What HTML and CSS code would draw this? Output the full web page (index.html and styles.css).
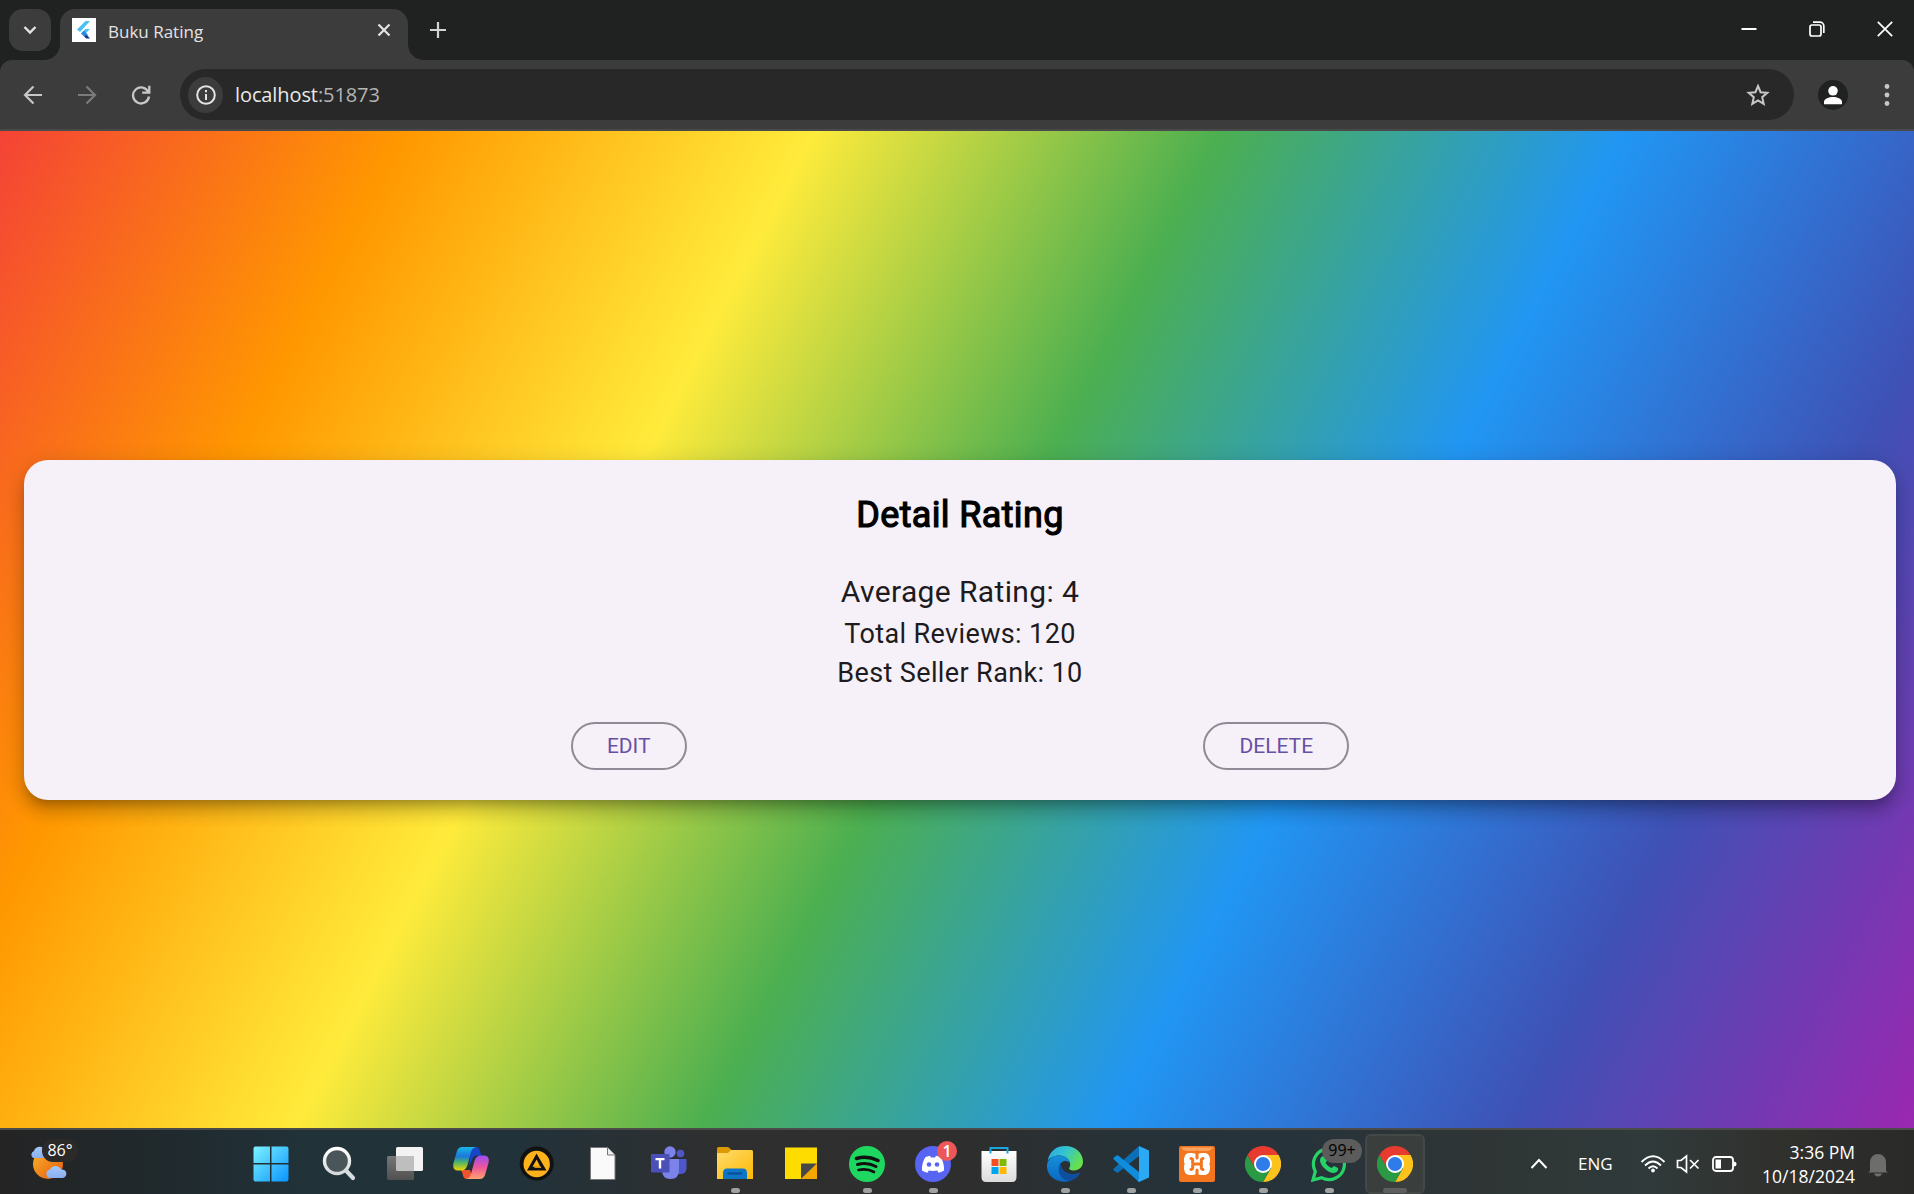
FILE: index.html
```html
<!DOCTYPE html>
<html lang="en">
<head>
<meta charset="utf-8">
<title>Buku Rating</title>
<link rel="stylesheet" href="styles.css">
</head>
<body>
<svg class="defs" width="0" height="0" aria-hidden="true">
  <defs>
    <linearGradient id="win" x1="0" y1="0" x2="1" y2="1"><stop offset="0" stop-color="#7df3ff"/><stop offset="1" stop-color="#0a94ff"/></linearGradient>
    <linearGradient id="glass" x1="0" y1="0" x2="0" y2="1"><stop offset="0" stop-color="#fff"/><stop offset="1" stop-color="#d5d9dc"/></linearGradient>
    <linearGradient id="tv" x1="0" y1="0" x2="0" y2="1"><stop offset="0" stop-color="#777"/><stop offset="1" stop-color="#505050"/></linearGradient>
    <linearGradient id="copA" x1="0" y1="0" x2="0" y2="1"><stop offset="0" stop-color="#1ab5e8"/><stop offset=".4" stop-color="#1b78dc"/><stop offset=".65" stop-color="#4db56a"/><stop offset="1" stop-color="#f2d600"/></linearGradient>
    <linearGradient id="copB" x1="0" y1="0" x2="0" y2="1"><stop offset="0" stop-color="#9a4df5"/><stop offset=".5" stop-color="#ee559a"/><stop offset="1" stop-color="#ffa36b"/></linearGradient>
    <linearGradient id="fold" x1="0" y1="0" x2="1" y2="1"><stop offset="0" stop-color="#ffdc70"/><stop offset="1" stop-color="#fbb900"/></linearGradient>
    <linearGradient id="sun" x1="0" y1="0" x2="1" y2="1"><stop offset="0" stop-color="#f9b52b"/><stop offset="1" stop-color="#e8590c"/></linearGradient>
    <linearGradient id="cloud" x1="0" y1="0" x2="0" y2="1"><stop offset="0" stop-color="#a3c8fb"/><stop offset="1" stop-color="#8aaef0"/></linearGradient>
    <linearGradient id="edgeTop" x1="0" y1="0" x2="1" y2=".5"><stop offset="0" stop-color="#2ba7e5"/><stop offset=".5" stop-color="#33c5cf"/><stop offset="1" stop-color="#68e04c"/></linearGradient>
    <linearGradient id="edgeLow" x1="0" y1="0" x2="0" y2="1"><stop offset="0" stop-color="#1590d8"/><stop offset="1" stop-color="#0a68c2"/></linearGradient>
    <linearGradient id="bag" x1="0" y1="0" x2="0" y2="1"><stop offset="0" stop-color="#fff"/><stop offset="1" stop-color="#dcdcdc"/></linearGradient>
    <symbol id="chrome" viewBox="0 0 36 36">
      <path d="M2.4 9A18 18 0 0 1 33.6 9H18L10.2 22.5Z" fill="#e63b2e"/>
      <path d="M33.6 9A18 18 0 0 1 18 36L25.8 22.5 18 9Z" fill="#fdc21c"/>
      <path d="M18 36A18 18 0 0 1 2.4 9L10.2 22.5H25.8Z" fill="#2a9a44"/>
      <circle cx="18" cy="18" r="9" fill="#fff"/><circle cx="18" cy="18" r="7.1" fill="#2f7bea"/>
    </symbol>
  </defs>
</svg>

<header class="tabstrip">
  <button class="tab-search" aria-label="Search tabs"><svg width="42" height="42" fill="none" stroke="#e3e3e3" stroke-width="2.4"><path d="M15.5 18 21 23.5 26.5 18"/></svg></button>
  <div class="tab">
    <svg class="favicon" width="24" height="24"><path fill="#fff" d="M0 0H24V24H0Z"/><path fill="#47c0f5" d="M13.5 3H18L8 14 5 11.5Z"/><path fill="#47c0f5" d="M13.5 11H18L12 17 9 15.5Z"/><path fill="#2b8ae0" d="M9 15.5 12 12.500 16 17 12 18.5Z"/><path fill="#10398c" d="M12 18 15 17 18 20.5H14Z"/></svg>
    <span class="tab-title">Buku Rating</span>
    <svg class="tab-close" width="14" height="14" stroke="#e3e3e3" stroke-width="2.2"><path d="M1.5 1.5 12.5 12.5M12.5 1.5 1.5 12.5"/></svg>
  </div>
  <svg class="tab-new" width="16" height="16" stroke="#d2d4d3" stroke-width="2.2"><path d="M8 0V16M0 8H16"/></svg>
  <div class="window-buttons">
    <svg width="16" height="16" stroke="#fff" stroke-width="2"><path d="M.5 8H15.5"/></svg>
    <svg width="16" height="16" fill="none" stroke="#fff" stroke-width="1.7"><rect x="1" y="4" width="11" height="11" rx="2"/><path d="M4 1.2H11A3.8 3.8 0 0 1 14.8 5V12"/></svg>
    <svg width="16" height="16" stroke="#fff" stroke-width="1.7"><path d="M.8.8 15.2 15.2M15.2.8.8 15.2"/></svg>
  </div>
</header>

<nav class="toolbar">
  <svg class="nav-icon" width="20" height="20" fill="none" stroke="#c7c7c7" stroke-width="2.2"><path d="M19 10H2.5M10.5 1.5 2 10 10.5 18.5"/></svg>
  <svg class="nav-icon" width="20" height="20" fill="none" stroke="#7b7b7b" stroke-width="2.2"><path d="M1 10H17.5M9.5 1.5 18 10 9.5 18.5"/></svg>
  <svg class="nav-icon" width="20" height="20" fill="none" stroke="#c7c7c7" stroke-width="2.3"><path d="M17.5 7.5A8 8 0 1 0 18 11.5M18.3.8V7.7H11.2"/></svg>
  <div class="omnibox">
    <span class="site-info"><svg width="20" height="20" fill="none" stroke="#e3e3e3" stroke-width="2"><circle cx="10" cy="10" r="8.8"/><path d="M10 9V15M10 5V7.2"/></svg></span>
    <span class="url">localhost<span class="port">:51873</span></span>
    <svg class="star" width="24" height="24" fill="none" stroke="#c7c7c7" stroke-width="2"><path d="M12 3 14.6 9.2 21.3 9.8 16.2 14.2 17.7 20.8 12 17.3 6.3 20.8 7.8 14.2 2.7 9.8 9.4 9.2Z"/></svg>
  </div>
  <svg class="profile" width="30" height="30"><circle cx="15" cy="15" r="15" fill="#1f2221"/><circle cx="15" cy="10.8" r="4.8" fill="#fff"/><path fill="#fff" d="M6 24.3V22C6 18.5 11 17 15 17S24 18.500 24 22V24.300Z"/></svg>
  <svg class="menu" width="6" height="24" fill="#c7c7c7"><circle cx="3" cy="3.500" r="2.400"/><circle cx="3" cy="12" r="2.400"/><circle cx="3" cy="20.500" r="2.400"/></svg>
</nav>

<main class="page">
  <section class="card">
    <h1 class="card-title">Detail Rating</h1>
    <p class="average">Average Rating: 4</p>
    <p class="stat">Total Reviews: 120</p>
    <p class="stat rank">Best Seller Rank: 10</p>
    <div class="actions">
      <button class="outlined">EDIT</button>
      <button class="outlined">DELETE</button>
    </div>
  </section>
</main>

<footer class="taskbar">
  <div class="weather">
    <svg width="38" height="36"><circle cx="18" cy="18" r="15" fill="url(#sun)"/><path fill="url(#cloud)" d="M3 12A4 4 0 0 1 4 5 6 6 0 0 1 15 4L16 12Z"/><path fill="url(#cloud)" d="M19 32A4.500 4.500 0 0 1 20 23.500 6 6 0 0 1 31 23.500 4.300 4.300 0 0 1 33 32Z"/></svg>
    <span class="temp">86°</span>
  </div>
  <div class="apps">
    <div class="app start"><svg width="36" height="36"><path fill="url(#win)" d="M2.500.5H17V17H.5V2.500Q.5.5 2.500.5ZM18.500.5H33.500Q35.500.5 35.500 2.500V17H18.500ZM.5 18.500H17V35.500H2.500Q.5 35.500.5 33.500ZM18.500 18.500H35.500V33.500Q35.500 35.500 33.500 35.500H18.500Z"/></svg></div>
    <div class="app"><svg width="36" height="36"><circle cx="16" cy="15" r="12.500" fill="#4a5559" stroke="url(#glass)" stroke-width="3.400"/><path d="M25 24.500 32 32" stroke="#d8dcdf" stroke-width="4.200" stroke-linecap="round"/></svg></div>
    <div class="app"><svg width="36" height="36"><rect x="9" y="1" width="27" height="24" rx="1.500" fill="#f2f2f2"/><rect x="0" y="10" width="27" height="24" rx="1.500" fill="url(#tv)"/><path d="M9 10H27V25H10.500Q9 25 9 23.500Z" fill="#bebebe"/></svg></div>
    <div class="app"><svg width="36" height="36"><path fill="#1745c7" d="M18 1H23C26 1 27 4 28 8.500Q29 9.500 30 9.500H23Q20 10 19 14L16 20Z"/><path fill="#f0532e" d="M8 24H17L19 30Q18 33 15 33C11 33 10 31 9.500 27Z"/><path fill="url(#copA)" d="M9 1H23Q19 2 18 6L14.500 19Q13 24.500 8 24.500H5Q-1 24.500.5 17L4 5Q5.500 1 9 1Z"/><path fill="url(#copB)" d="M27 33H13Q17 32 18 28L21.500 15Q23 9.500 28 9.500H31Q37 9.500 35.500 17L32 29Q30.500 33 27 33Z"/></svg></div>
    <div class="app"><svg width="36" height="36"><circle cx="17.700" cy="17.500" r="17" fill="#111"/><circle cx="17.700" cy="18" r="13.200" fill="#fdb21c"/><path fill="#111" fill-rule="evenodd" d="M17.500 7.500 27.500 24.500H8L17.500 7.500ZM17.700 13.500 13.500 20.800H21.200Z"/><path fill="#fdb21c" d="M15.500 20.500H22V21.800H15.500Z"/></svg></div>
    <div class="app"><svg width="36" height="36"><path d="M5.500 1.500H22.500L30 9V33.500H5.500Z" fill="#fafafa" stroke="#777" stroke-width="1"/><path d="M22.500 1.500V9H30" fill="#ececec" stroke="#777"/></svg></div>
    <div class="app"><svg width="36" height="36"><circle cx="29.500" cy="7.500" r="3.800" fill="#4f56c7"/><path fill="#4f56c7" d="M23 13H35.500V22Q35.500 28 29 28H23Z"/><circle cx="19" cy="6" r="5.700" fill="#7b83eb"/><path fill="#7b83eb" d="M11 13H28V24Q28 33 19.500 33T11 24Z"/><rect y="8" width="18.500" height="18.500" rx="1" fill="#4b50b8"/><path fill="#fff" d="M4.500 12H13.500V14.200H10.200V22.500H7.800V14.200H4.500Z"/></svg></div>
    <div class="app running"><svg width="36" height="36"><path fill="#dd9a00" d="M0 2.500Q0 1 1.500 1H10Q11.500 1 12.500 2L15 4.500 12 8H0Z"/><path fill="url(#fold)" d="M0 7H11L14 4H34.500Q36 4 36 5.500V33H0Z"/><path fill="#0f75c6" d="M6 33V27Q6 22.500 10 22.500H26Q30 22.500 30 27V33Z"/><path stroke="#064d91" stroke-width="2" d="M10.500 27.500H25"/></svg></div>
    <div class="app"><svg width="36" height="36"><path fill="#ffdc00" d="M2 1.500H34V18L18 33H2Z"/><path fill="#474747" d="M18 17.500H34L18 33Z"/><path fill="#f3a700" d="M34 17.500V33H18Z"/></svg></div>
    <div class="app running"><svg width="36" height="36" fill="none" stroke="#111" stroke-linecap="round"><circle cx="18" cy="18" r="18" fill="#1ed760" stroke="none"/><path stroke-width="3.600" d="M7.500 12.500Q18 9.200 29 14.500"/><path stroke-width="3" d="M8.500 18.500Q18 15.800 27 20.500"/><path stroke-width="2.600" d="M9.500 24Q18 22 25 26"/></svg></div>
    <div class="app running"><svg width="36" height="36"><circle cx="18" cy="18" r="18" fill="#5865f2"/><path fill="#fff" d="M10.500 11 15 9.800 16 11.500H20L21 9.800 25.500 11Q29.500 17 29 24.500 26 26.500 23.500 26.800L22.200 24.600Q18 25.500 13.800 24.600L12.500 26.800Q10 26.500 7 24.500 6.500 17 10.500 11Z"/><circle cx="14" cy="18.500" r="2.300" fill="#5865f2"/><circle cx="22" cy="18.500" r="2.300" fill="#5865f2"/></svg><span class="count">1</span></div>
    <div class="app"><svg width="36" height="36"><path fill="url(#bag)" d="M.5 5H35.500V31Q35.500 36 31 36H5Q.5 36 .5 31Z"/><path d="M9.500 7.500V2H26.500V7.500" fill="none" stroke="#19a5df" stroke-width="2"/><path fill="#f25022" d="M10.500 13H17.500V20H10.500Z"/><path fill="#7fba00" d="M18.500 13H25.500V20H18.500Z"/><path fill="#00a4ef" d="M10.500 21H17.500V28H10.500Z"/><path fill="#ffb900" d="M18.500 21H25.500V28H18.500Z"/></svg></div>
    <div class="app running"><svg width="36" height="36"><path fill="url(#edgeTop)" d="M.5 15C3 4 10 0 18 0 29 0 36 7.500 36 15.500 36 21 32 24.500 27 24.500 23 24.500 21.500 23 22.500 21.500 25 17 21 10 13 9.500 6 9.500 2 12 .5 15Z"/><path fill="url(#edgeLow)" d="M0 19C1 12 7 9 13 9.500 19 10 23 13.500 23 17.500 22 14 14 13.500 12.500 20 11 28 18 35 25 34.500 12 39-1 31 0 19Z"/><path fill="#0f4fa0" d="M14 16.500C9.500 21 11 33 22 35 27 34.500 31 31 33 27.500 33.500 26.500 32.500 26.300 31.500 27 22 30 13 25 14 16.500Z"/></svg></div>
    <div class="app running"><svg width="36" height="36"><path fill="#0b70b8" d="M26 0V10L4.500 27 .8 24.500Q0 23.500.8 22.500Z"/><path fill="#0f8cdb" d="M26 36V26L4.500 9 .8 11.500Q0 12.500.8 13.500Z"/><path fill="#2aa9f5" d="M26 0 36 4.500V31.500L26 36Q24 35 26 33Z"/></svg></div>
    <div class="app running"><svg width="36" height="36"><rect width="36" height="36" rx="2" fill="#f3761f"/><path d="M2 1.500H34Q32 5 27 5H9Q4 5 2 1.500Z" fill="#fba461"/><path d="M10 11.500H13Q15.500 11.500 16 14H20Q20.500 11.500 23 11.500H26Q27.500 15 25 18 27.500 21 26 24.500H23Q20.500 24.500 20 22H16Q15.500 24.500 13 24.500H10Q8.500 21 11 18 8.500 15 10 11.500Z" fill="#fff" stroke="#fff" stroke-width="9" stroke-linejoin="round"/><path d="M18 5.500V12M18 30.500V24M12 12.500Q14.500 13 13.500 16 13 18 17 18H19Q23 18 22.500 16 21.500 13 24 12.500M12 23.500Q14.500 23 13.500 20 13 18 17 18H19Q23 18 22.500 20 21.500 23 24 23.500" fill="none" stroke="#f3761f" stroke-width="3" stroke-linecap="round"/></svg></div>
    <div class="app running"><svg width="36" height="36"><use href="#chrome"/></svg></div>
    <div class="app running"><svg width="36" height="36"><path d="M2 34 4.300 25.500A15.500 15.500 0 1 1 10.500 31.700Z" fill="none" stroke="#25d366" stroke-width="3.200"/><path fill="#25d366" d="M12 10Q14.500 9 15.500 12L16 14.500 14.500 17Q17 21 20.500 22L23 20 27 22Q28 26 23 27 18 27 12.500 21.500 7.500 15.500 9.500 12Q10.500 10.500 12 10Z"/></svg><span class="unread">99+</span></div>
    <div class="app running active"><svg width="36" height="36"><use href="#chrome"/></svg></div>
  </div>
  <div class="tray">
    <svg class="chevron" width="18" height="12" fill="none" stroke="#fff" stroke-width="2"><path d="M1.500 10 9 2 16.500 10"/></svg>
    <span class="lang">ENG</span>
    <svg class="wifi" width="26" height="20" fill="none" stroke="#fff" stroke-width="1.800"><path d="M1.500 8Q13-3.500 24.500 8M5 11.500Q13 3.500 21 11.500M8.500 14.500Q13 10 17.500 14.500"/><circle cx="13" cy="16.500" r="1.500" fill="#fff" stroke-width="1"/></svg>
    <svg class="sound" width="24" height="20" fill="none" stroke="#fff" stroke-width="1.700"><path d="M1.500 6.500H5L10.500 2V18L5 13.500H1.500ZM14 6 22.500 14.500M22.500 6 14 14.500"/></svg>
    <svg class="battery" width="25" height="18"><rect x="1" y="2" width="20" height="14" rx="3" fill="none" stroke="#fff" stroke-width="1.800"/><path fill="#fff" d="M3.500 4.500H9V13.500H3.500ZM21.500 6.500Q24.500 6.500 24.500 9T21.500 11.500Z"/></svg>
    <div class="clock"><span class="time">3:36 PM</span><span class="date">10/18/2024</span></div>
    <svg class="bell" width="20" height="24" fill="#6d6d6b"><path d="M2 18V9A8 8 0 0 1 18 9V18L20 19.500H0ZM6 20.500H14Q13 23.500 10 23.500T6 20.500Z"/></svg>
  </div>
</footer>
</body>
</html>
```
FILE: styles.css
```css
* { box-sizing: border-box; }
body {
  margin: 0;
  width: 1914px;
  height: 1194px;
  overflow: hidden;
  display: flex;
  flex-direction: column;
  font-family: "Open Sans", "Noto Sans", sans-serif;
  background: #1f2221;
}
.defs { position: absolute; }
svg { display: block; flex: none; }
button { font: inherit; background: none; border: 0; padding: 0; }

.tabstrip {
  height: 60px;
  flex: none;
  display: flex;
  align-items: flex-start;
  padding-left: 9px;
  background: #1f2221;
}
.tab-search { width: 42px; height: 42px; margin-top: 9px; border-radius: 14px; background: #3c3c3c; }
.tab {
  position: relative;
  width: 348px;
  height: 51px;
  margin: 9px 0 0 9px;
  padding: 0 17px 9px 12px;
  border-radius: 15px 15px 0 0;
  background: #3c3c3c;
  display: flex;
  align-items: center;
}
.tab::before, .tab::after {
  content: "";
  position: absolute;
  bottom: 0;
  width: 15px;
  height: 15px;
}
.tab::before { left: -15px; background: radial-gradient(circle at 0 0, transparent 14.500px, #3c3c3c 15px); }
.tab::after { right: -15px; background: radial-gradient(circle at 100% 0, transparent 14.500px, #3c3c3c 15px); }
.tab-title { margin: 4px auto 0 12px; font-size: 17px; line-height: 24px; color: #e3e3e3; }
.tab-new { margin: 22px 0 0 22px; }
.window-buttons { display: flex; gap: 52px; margin: 21px 21px 0 auto; }

.toolbar {
  height: 71px;
  flex: none;
  display: flex;
  align-items: center;
  padding: 0 24px 0 23px;
  background: #3c3c3c;
  border-bottom: 2px solid #4a4a4a;
  border-radius: 12px 12px 0 0;
}
.nav-icon { margin-right: 34px; }
.nav-icon:nth-child(3) { margin-right: 29px; }
.omnibox {
  flex: none;
  width: 1614px;
  height: 51px;
  padding: 0 24px 0 8px;
  border-radius: 26px;
  background: #282828;
  display: flex;
  align-items: center;
}
.site-info { width: 35px; height: 36px; border-radius: 50%; background: #3c3c3c; display: grid; place-items: center; }
.url { margin-left: 12px; font-size: 20px; color: #e8e8e8; letter-spacing: -.1px; }
.port { color: #b4b4b4; }
.star { margin-left: auto; }
.profile { margin-left: 24px; }
.menu { margin-left: 36px; }

/* The web view runs slightly past the right edge of the window. */
.page {
  flex: none;
  width: 1920px;
  height: 997px;
  padding: 0 24px;
  display: flex;
  align-items: flex-start;
  background: linear-gradient(117.440deg, #f44336, #ff9800, #ffeb3b, #4caf50, #2196f3, #3f51b5, #9c27b0);
  font-family: Roboto, sans-serif;
}
.card {
  width: 1872px;
  height: 340px;
  margin-top: 329px;
  padding: 31px 30px;
  border-radius: 24px;
  background: #f6f1f9;
  box-shadow: 0 8px 8px -5px rgba(0,0,0,.2), 0 12px 15px 1px rgba(0,0,0,.14), 0 5px 21px 3px rgba(0,0,0,.12);
  display: flex;
  flex-direction: column;
  align-items: center;
  color: #1d1b20;
}
.card p, .card h1 { margin: 0; white-space: nowrap; }
.card-title { font-size: 36px; font-weight: 400; line-height: 48px; letter-spacing: .36px; color: #000; -webkit-text-stroke: 1.200px #000; }
.card .average { margin-top: 30px; font-size: 30px; line-height: 45px; letter-spacing: .38px; }
.stat { font-size: 27px; line-height: 40px; letter-spacing: .38px; }
.card .rank { margin-top: -1px; }
.actions { margin-top: 29px; width: 1812px; display: flex; justify-content: space-evenly; }
.outlined {
  height: 48px;
  padding: 0 34px;
  border: 2px solid #8f8a95;
  border-radius: 24px;
  color: #6750a4;
  font-size: 21px;
}

.taskbar {
  height: 66px;
  flex: none;
  display: flex;
  border-top: 2px solid #4b4b4a;
  background: linear-gradient(90deg, #242424 0, #20292d 160px, #213238 300px, #22323a 520px, #2f2f2f 720px, #2e2e2e 970px, #263238 1130px, #26333b 1280px, #2f3535 1480px, #303a3a 1650px, #30302d 1780px, #2a2a29 1914px);
  color: #fff;
}
.weather { position: relative; width: 240px; padding: 16px 0 0 30px; }
.temp {
  position: absolute;
  left: 42px;
  top: 9px;
  width: 36px;
  height: 23px;
  border-radius: 11px;
  background: #2c2a29;
  font-size: 16px;
  line-height: 22px;
  text-align: center;
}
.apps { display: flex; }
.app { position: relative; width: 66px; height: 64px; padding: 16px 15px 0; }
.start { padding-left: 13px; }
.running::after {
  content: "";
  position: absolute;
  left: 29px;
  top: 58px;
  width: 9px;
  height: 5px;
  border-radius: 3px;
  background: #a0a2a2;
}
.active::before {
  content: "";
  position: absolute;
  inset: 4px 3px 0;
  border: 2px solid #444847;
  border-radius: 6px;
  background: #3a3f3e;
}
.active svg { position: relative; }
.active::after { left: 21px; width: 24px; background: #5f5f5f; }
.count, .unread { position: absolute; text-align: center; }
.count { left: 37px; top: 11px; width: 20px; height: 20px; border-radius: 50%; background: #ed5757; font-size: 16px; font-weight: 600; line-height: 20px; }
.unread { left: 26px; top: 9px; width: 40px; height: 24px; border-radius: 12px; background: #5c5c5c; color: #000; font-size: 16px; line-height: 23px; }

.tray { display: flex; align-items: flex-start; font-size: 17px; }
.chevron { margin: 28px 0 0 102px; }
.lang { margin: 22px 0 0 30px; width: 36px; line-height: 24px; letter-spacing: 0; }
.wifi { margin: 24px 0 0 26px; }
.sound { margin: 24px 0 0 10px; }
.battery { margin: 25px 0 0 12px; }
.clock { width: 118px; margin-top: 10px; display: flex; flex-direction: column; align-items: flex-end; font-size: 17.500px; line-height: 24px; }
.bell { margin: 23px 0 0 13px; }
```
